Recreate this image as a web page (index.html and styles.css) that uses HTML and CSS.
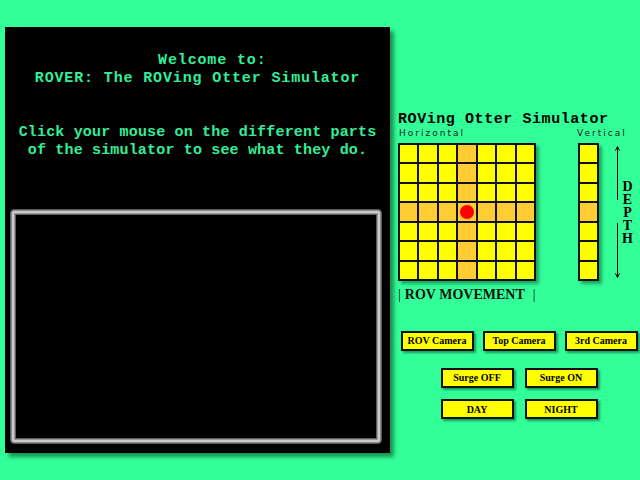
FILE: index.html
```html
<!DOCTYPE html>
<html>
<head>
<meta charset="utf-8">
<link rel="stylesheet" href="styles.css">
</head>
<body>
<div class="screen">
  <p class="welcome">&nbsp;&nbsp;&nbsp;Welcome to:<br>ROVER: The ROVing Otter Simulator</p>
  <p class="intro">Click your mouse on the different parts<br>of the simulator to see what they do.</p>
  <div class="viewport"></div>
</div>
<div class="side">
  <div class="sim-title">ROVing Otter Simulator</div>
  <div class="board">
    <div class="col-h">
      <div class="axis-label">Horizontal</div>
      <div class="grid7">
        <div class="c"></div><div class="c"></div><div class="c"></div><div class="c o"></div><div class="c"></div><div class="c"></div><div class="c"></div>
        <div class="c"></div><div class="c"></div><div class="c"></div><div class="c o"></div><div class="c"></div><div class="c"></div><div class="c"></div>
        <div class="c"></div><div class="c"></div><div class="c"></div><div class="c o"></div><div class="c"></div><div class="c"></div><div class="c"></div>
        <div class="c o"></div><div class="c o"></div><div class="c o"></div><div class="c o"><span class="dot"></span></div><div class="c o"></div><div class="c o"></div><div class="c o"></div>
        <div class="c"></div><div class="c"></div><div class="c"></div><div class="c o"></div><div class="c"></div><div class="c"></div><div class="c"></div>
        <div class="c"></div><div class="c"></div><div class="c"></div><div class="c o"></div><div class="c"></div><div class="c"></div><div class="c"></div>
        <div class="c"></div><div class="c"></div><div class="c"></div><div class="c o"></div><div class="c"></div><div class="c"></div><div class="c"></div>
      </div>
    </div>
    <div class="col-v">
      <div class="axis-label">Vertical</div>
      <div class="bar">
        <div class="c"></div><div class="c"></div><div class="c"></div><div class="c o"></div><div class="c"></div><div class="c"></div><div class="c"></div>
      </div>
    </div>
    <div class="depth">
      <svg class="depth-line" width="9" height="138" viewBox="0 0 9 138">
        <line x1="4.5" y1="4" x2="4.5" y2="57" stroke="#000" stroke-width="1"/>
        <line x1="4.5" y1="80" x2="4.5" y2="134" stroke="#000" stroke-width="1"/>
        <polyline points="2.5,7.5 4.5,3.5 6.5,7.5" fill="none" stroke="#000" stroke-width="1"/>
        <polyline points="2.5,130.5 4.5,134.5 6.5,130.5" fill="none" stroke="#000" stroke-width="1"/>
      </svg>
      <div class="depth-text">DEPTH</div>
    </div>
  </div>
  <div class="movement"><span class="pipe">|</span>ROV MOVEMENT<span class="pipe pipe-r">|</span></div>
  <div class="buttons">
    <div class="row row-3">
      <div class="btn">ROV Camera</div>
      <div class="btn">Top Camera</div>
      <div class="btn">3rd Camera</div>
    </div>
    <div class="row row-2 first">
      <div class="btn">Surge OFF</div>
      <div class="btn">Surge ON</div>
    </div>
    <div class="row row-2">
      <div class="btn">DAY</div>
      <div class="btn">NIGHT</div>
    </div>
  </div>
</div>
</body>
</html>
```
FILE: styles.css
```css
html, body {
  margin: 0;
  padding: 0;
}
body {
  background: #33ff99;
  width: 640px;
  height: 480px;
  overflow: hidden;
  display: flex;
  align-items: flex-start;
}
.screen {
  box-sizing: border-box;
  margin: 27px 0 0 5px;
  width: 385px;
  height: 426px;
  background: #000;
  padding-top: 24.5px;
  box-shadow: 4px 4px 4px rgba(0, 60, 30, 0.55);
  display: flex;
  flex-direction: column;
}
.welcome, .intro {
  margin: 0;
  font-family: "Liberation Mono", "Courier New", monospace;
  font-weight: bold;
  font-size: 15px;
  line-height: 18px;
  color: #33ee99;
  text-align: center;
}
.welcome {
  letter-spacing: 0.86px;
}
.intro {
  margin-top: 36px;
  letter-spacing: 0.17px;
}
.viewport {
  box-sizing: border-box;
  margin: 49.5px 0 0 5px;
  width: 372px;
  height: 235px;
  border: 1px solid #5a5a5a;
  border-radius: 4px;
  box-shadow:
    inset 0 0 0 1px #8a8a8a,
    inset 0 0 0 3px #cacaca,
    inset 0 0 0 4px #9a9a9a,
    inset 0 0 0 5px #5e5e5e;
  background: #000;
}
.side {
  width: 242px;
  margin-left: 8px;
  padding-top: 112px;
}
.sim-title {
  font-family: "Liberation Mono", "Courier New", monospace;
  font-weight: bold;
  font-size: 15px;
  line-height: 16px;
  letter-spacing: 0.57px;
  color: #000;
}
.board {
  display: flex;
  align-items: flex-end;
}
.axis-label {
  font-family: "DejaVu Sans", Verdana, sans-serif;
  font-size: 9px;
  line-height: 11px;
  letter-spacing: 2px;
  color: #222;
  white-space: nowrap;
  margin-bottom: 4px;
  padding-left: 1px;
}
.col-v {
  width: 21px;
  margin-left: 42px;
}
.col-v .axis-label {
  padding-left: 0;
  margin-left: -1px;
}
.grid7, .bar {
  box-sizing: border-box;
  display: grid;
  gap: 2px;
  padding: 2px;
  background: #111;
  height: 138px;
  grid-template-rows: repeat(7, 1fr);
  box-shadow: 3px 3px 3px rgba(0, 60, 30, 0.45);
}
.grid7 {
  width: 138px;
  grid-template-columns: repeat(7, 1fr);
}
.bar {
  width: 21px;
  grid-template-columns: 1fr;
}
.c {
  background: #ffff00;
  display: flex;
  align-items: center;
  justify-content: center;
}
.c.o {
  background: #ffcc33;
}
.dot {
  width: 14px;
  height: 14px;
  border-radius: 50%;
  background: #ff0000;
}
.depth {
  display: flex;
  height: 138px;
  margin-left: 14px;
}
.depth-line {
  display: block;
}
.depth-text {
  writing-mode: vertical-rl;
  text-orientation: upright;
  width: 10px;
  padding-top: 36px;
  font-family: "Liberation Serif", "Times New Roman", serif;
  font-weight: bold;
  font-size: 14px;
  line-height: 10px;
  letter-spacing: -1.9px;
  color: #000;
}
.movement {
  margin-top: 6.3px;
  font-family: "Liberation Serif", "Times New Roman", serif;
  font-weight: bold;
  font-size: 14px;
  line-height: 16px;
  color: #111;
  display: flex;
  align-items: center;
}
.pipe {
  font-weight: normal;
  margin: 0 4px 0 0;
}
.pipe-r {
  margin: 0 0 0 8px;
}
.buttons {
  margin-top: 27.4px;
  display: flex;
  flex-direction: column;
}
.row {
  display: flex;
  justify-content: center;
}
.row-3 {
  gap: 9px;
}
.row-2 {
  gap: 11px;
  margin-top: 11.3px;
}
.row-2.first {
  margin-top: 17.3px;
}
.btn {
  box-sizing: border-box;
  width: 73px;
  height: 20px;
  border: 2px solid #111;
  background: #ffff00;
  box-shadow: 2px 2px 2px rgba(0, 60, 30, 0.5);
  font-family: "Liberation Serif", "Times New Roman", serif;
  font-weight: bold;
  font-size: 10px;
  color: #000;
  display: flex;
  align-items: center;
  justify-content: center;
}
```
